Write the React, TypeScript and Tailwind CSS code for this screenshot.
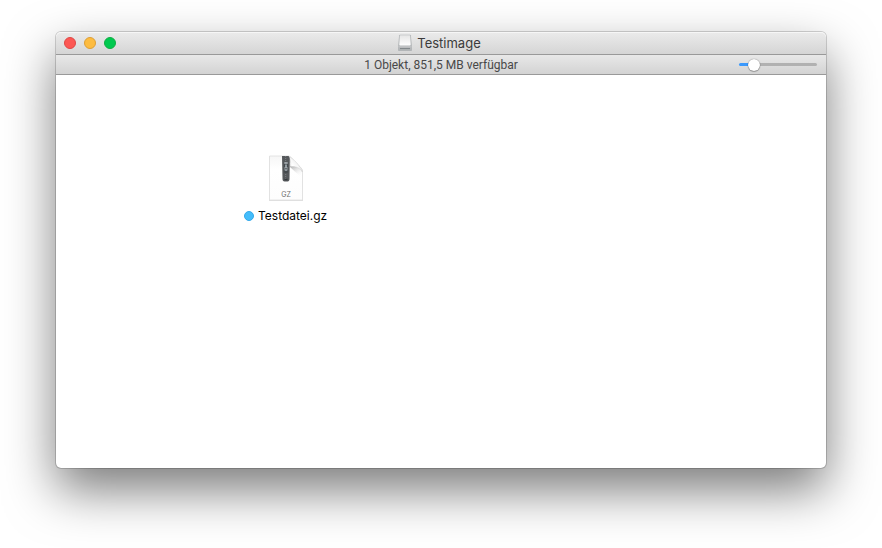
import { useState } from "react";

const windowButtons = [
  { label: "Schließen", className: "bg-[#fc5753] border-[#df4744]" },
  { label: "Minimieren", className: "bg-[#fdbc40] border-[#de9f34]" },
  { label: "Vergrößern", className: "bg-[#00c94f] border-[#0fae42]" },
];

const DriveIcon = () => (
  <svg width="16" height="18" viewBox="0 0 16 18" aria-hidden="true">
    <defs>
      <linearGradient id="drive-top" x1="0" y1="0" x2="0" y2="1">
        <stop offset="0" stopColor="#e6e6e6" />
        <stop offset="1" stopColor="#ffffff" />
      </linearGradient>
    </defs>
    <path
      d="M3 .8h10c.5 0 .8.3.9.8l1 10.9v3.700c0 .5-.3.8-.8.8H1.900c-.5 0-.8-.3-.8-.8v-3.700L2.100 1.600c.1-.5.4-.8.9-.8z"
      fill="#b1b4b6"
    />
    <path
      d="M3.400 1.300h9.200c.4 0 .6.2.6.6l.5 8.600c0 .7-.4 1.100-1.100 1.100H3.400c-.7 0-1.100-.4-1.100-1.100l.5-8.600c0-.4.2-.6.6-.6z"
      fill="url(#drive-top)"
    />
    <path d="M1.300 12.900h13.400v3.500H1.300z" fill="#b4b7b9" />
    <path d="M3 14.100h10v1H3z" fill="#7d8386" />
    <path d="M1.300 12.500h13.400v.7H1.300z" fill="#cfd1d2" />
  </svg>
);

const ArchiveIcon = () => (
  <svg width="36" height="48" viewBox="0 0 36 48" aria-hidden="true">
    <defs>
      <linearGradient id="page" x1="0" y1="0" x2="0" y2="1">
        <stop offset="0" stopColor="#f6f6f6" />
        <stop offset=".3" stopColor="#ffffff" />
        <stop offset="1" stopColor="#fdfdfd" />
      </linearGradient>
      <linearGradient id="fold" x1="0" y1="1" x2="1" y2="0">
        <stop offset="0" stopColor="#d2d2d2" />
        <stop offset=".35" stopColor="#ffffff" />
        <stop offset="1" stopColor="#dedede" />
      </linearGradient>
      <linearGradient id="curl" x1="0" y1="0" x2=".6" y2="1">
        <stop offset="0" stopColor="#a9a9a9" />
        <stop offset="1" stopColor="#ffffff" stopOpacity="0" />
      </linearGradient>
    </defs>
    <path d="M1 1h20l14 14v31H1z" fill="#000" opacity=".12" />
    <path
      d="M1.500 1H20c3.500 0 5 4 6.500 7.500 3.500 1.500 8 4 8 8.500v28h-33z"
      fill="url(#page)"
      stroke="#dedede"
      strokeWidth=".8"
    />
    <path d="M22 11c4-.5 9 .5 12.300 5.500v7L22 12z" fill="url(#curl)" />
    <path
      d="M20 1c2.500 2 3 6.500 2.600 10.600 4-.7 9.500 1.200 11.700 5.200C33 11.500 25 3 20 1z"
      fill="url(#fold)"
      stroke="#c9c9c9"
      strokeWidth=".5"
    />
    <path d="M14 1h6.500c1 1 1.300 2 1.300 3.200L21.500 24c0 1.500-.7 2.400-1.800 2.400h-3.200c-1.300 0-2-.9-2-2.400z" fill="#55585b" />
    <path d="M17.700 1v24" stroke="#7c8286" strokeWidth="1" strokeDasharray="1 1" />
    <path d="M16 8.500h3.800l.4 8c0 1-.8 1.500-2.200 1.500s-2.200-.5-2.200-1.500z" fill="#454a4e" />
    <path d="M16.300 7.200h3.400v1.600h-3.400z" fill="#a9b0b5" />
    <path d="M17 9.500h2v6h-2z" fill="#929ba1" />
    <path d="M16.600 12h2.800v3.500h-2.800z" fill="#b3bbc0" />
    <path d="M17.400 12.800h1.200v1.800h-1.200z" fill="#33383b" />
    <path d="M16.500 24.500h3" stroke="#33373a" strokeWidth="1.500" />
    <text
      x="18"
      y="42"
      textAnchor="middle"
      fontSize="7"
      fill="#6d6d6d"
      className="font-['Inter',sans-serif]"
    >
      GZ
    </text>
  </svg>
);

const SizeSlider = () => {
  const [size, setSize] = useState(14);
  // the thumb is 12px wide, so its centre travels from 6px to 100% - 6px
  const fill = `calc(6px + (100% - 12px) * ${size / 100})`;

  return (
    <input
      type="range"
      aria-label="Symbolgröße"
      min={0}
      max={100}
      value={size}
      onChange={(e) => setSize(Number(e.target.value))}
      style={{
        backgroundImage: `linear-gradient(to right, #3b99fc ${fill}, #b1b1b1 ${fill})`,
      }}
      className="h-[3px] w-[78px] appearance-none rounded-full [&::-webkit-slider-thumb]:size-3 [&::-webkit-slider-thumb]:appearance-none [&::-webkit-slider-thumb]:rounded-full [&::-webkit-slider-thumb]:bg-white [&::-webkit-slider-thumb]:shadow-[0_0_1px_rgba(0,0,0,0.6),0_1px_1px_rgba(0,0,0,0.25)]"
    />
  );
};

export default function App() {
  return (
    <div className="flex min-h-screen flex-col bg-white px-14 pt-8 pb-20 font-['Inter','Liberation_Sans',sans-serif]">
      <main className="flex flex-1 flex-col rounded-[5px] bg-white shadow-[0_0_0_1px_rgba(0,0,0,0.14),0_0_1px_rgba(0,0,0,0.3),0_22px_50px_rgba(0,0,0,0.52)]">
        <header className="grid h-[23px] grid-cols-[1fr_auto_1fr] items-center rounded-t-[5px] border-b border-[#999999] bg-linear-to-b from-[#ebebeb] to-[#d5d5d5] pr-3 pl-2 shadow-[inset_0_1px_0_#f6f6f6]">
          <div className="flex gap-2">
            {windowButtons.map(({ label, className }) => (
              <button
                key={label}
                type="button"
                aria-label={label}
                className={`size-3 rounded-full border ${className}`}
              />
            ))}
          </div>
          <h1 className="flex items-center gap-1 text-[13px] leading-4 text-[#3b3b3b]">
            <DriveIcon />
            Testimage
          </h1>
        </header>
        <div className="grid h-5 grid-cols-[1fr_auto_1fr] items-center border-b border-[#999999] bg-linear-to-b from-[#e8e8e8] to-[#d3d3d3] px-[9px]">
          <p className="col-start-2 font-['Roboto','Liberation_Sans',sans-serif] text-[12px] leading-4 text-[#484848]">
            1 Objekt, 851,5 MB verfügbar
          </p>
          <div className="flex items-center justify-end">
            <SizeSlider />
          </div>
        </div>
        <section className="flex-1 pt-20 pl-[188px]">
          <figure className="flex w-fit flex-col items-center gap-[5px]">
            <ArchiveIcon />
            <figcaption className="flex items-center gap-1 text-[12px] leading-4 text-black">
              <span className="size-[10px] rounded-full border border-[#35a9ea] bg-[#44bdfb]" />
              Testdatei.gz
            </figcaption>
          </figure>
        </section>
      </main>
    </div>
  );
}
